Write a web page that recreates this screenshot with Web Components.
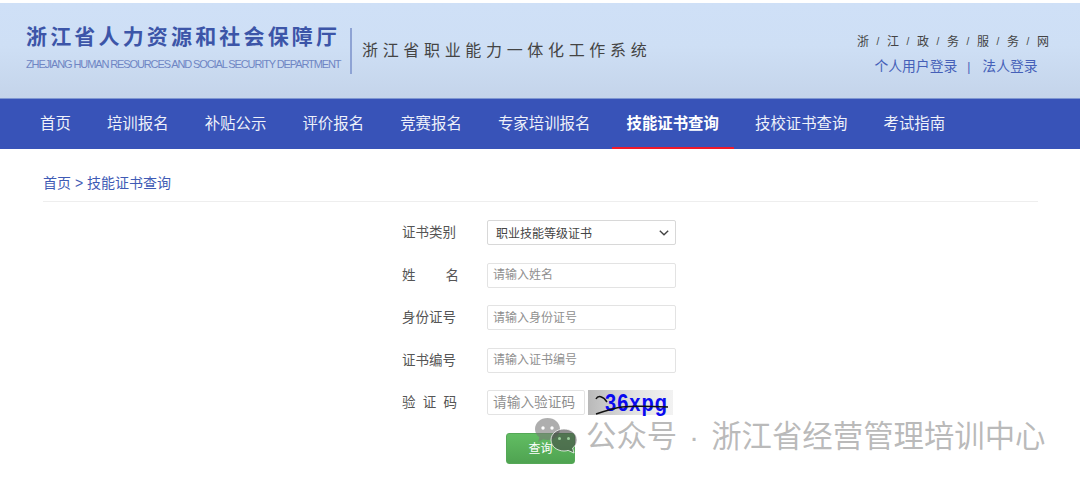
<!DOCTYPE html>
<html lang="zh">
<head>
<meta charset="utf-8">
<title>技能证书查询</title>
<style>
html, body { margin: 0; padding: 0; background: #fff; }
body { width: 1080px; height: 479px; overflow: hidden; position: relative; font-family: "Liberation Sans", "Noto Sans CJK SC", sans-serif; }
</style>
</head>
<body>
<site-header></site-header>
<main-nav active="技能证书查询" items="首页,培训报名,补贴公示,评价报名,竞赛报名,专家培训报名,技能证书查询,技校证书查询,考试指南"></main-nav>
<bread-crumb></bread-crumb>
<query-form>
  <form-row label="证书类别"><cert-select></cert-select></form-row>
  <form-row label="姓名" spread="wide"><text-field placeholder="请输入姓名"></text-field></form-row>
  <form-row label="身份证号"><text-field placeholder="请输入身份证号"></text-field></form-row>
  <form-row label="证书编号"><text-field placeholder="请输入证书编号"></text-field></form-row>
  <form-row label="验证码" spread="narrow"><text-field short placeholder="请输入验证码"></text-field><captcha-box></captcha-box></form-row>
  <query-button></query-button>
</query-form>
<wx-mark></wx-mark>

<script>
const FONT = '"Liberation Sans", "Noto Sans CJK SC", sans-serif';

class SiteHeader extends HTMLElement {
    constructor() {
        super();
        this.attachShadow({mode: 'open'});
    }
    connectedCallback() {
        const links = '浙江政务服务网'.split('').map(c => `<span>${c}</span>`).join('<i>/</i>');
        this.shadowRoot.innerHTML = `
            <style>
                :host { display: block; box-sizing: border-box; height: 96px; margin-top: 3px; padding: 21px 31px 0 26px;
                    background: linear-gradient(180deg, #cfe0f7 0%, #cedff5 45%, #c4d4ea 100%);
                    border-bottom: 1px solid #7f97d2; font-family: ${FONT}; }
                .wrap { display: flex; align-items: flex-start; }
                .org { width: 324px; }
                .cn { font-size: 21px; line-height: 26px; font-weight: bold; color: #3c55a8; letter-spacing: 3.17px; white-space: nowrap; }
                .en { font-size: 11px; line-height: 14px; margin-top: 7px; color: #6f86c4; letter-spacing: -1.11px; white-space: nowrap; }
                .bar { width: 2px; height: 46px; background: #8ea3d4; margin-top: 4px; }
                .sys { margin: 17px 0 0 10px; font-size: 16px; line-height: 20px; letter-spacing: 4.67px; color: #444; white-space: nowrap; }
                .right { margin-left: auto; display: flex; flex-direction: column; align-items: center; width: 192px; }
                .gov { display: flex; justify-content: space-between; width: 100%; margin-top: 10px; font-size: 12px; line-height: 16px; color: #444; }
                .gov i { font-style: normal; font-size: 10px; }
                .login { margin: 8px 0 0 6px; font-size: 13.8px; line-height: 18px; color: #4560b8; white-space: nowrap; display: flex; }
                .login b { font-weight: normal; font-size: 12px; margin: 0 12px 0 10px; }
            </style>
            <div class="wrap">
                <div class="org">
                    <div class="cn">浙江省人力资源和社会保障厅</div>
                    <div class="en">ZHEJIANG HUMAN RESOURCES AND SOCIAL SECURITY DEPARTMENT</div>
                </div>
                <div class="bar"></div>
                <div class="sys">浙江省职业能力一体化工作系统</div>
                <div class="right">
                    <div class="gov">${links}</div>
                    <div class="login"><span>个人用户登录</span><b>|</b><span>法人登录</span></div>
                </div>
            </div>
        `;
    }
}
customElements.define('site-header', SiteHeader);

class MainNav extends HTMLElement {
    constructor() {
        super();
        this.attachShadow({mode: 'open'});
    }
    connectedCallback() {
        const active = this.getAttribute('active');
        const items = this.getAttribute('items').split(',').map(t =>
            `<a class="${t === active ? 'on' : ''}">${t}</a>`).join('');
        this.shadowRoot.innerHTML = `
            <style>
                :host { display: block; height: 50px; background: #3853b8; font-family: ${FONT}; }
                nav { display: flex; gap: 6.18px; padding-left: 25px; height: 100%; }
                a { box-sizing: border-box; height: 50px; padding: 0 15px; line-height: 50px; font-size: 15.4px; color: #eef1fa; white-space: nowrap; }
                a.on { font-weight: bold; color: #fff; border-bottom: 2px solid #f01a2a; }
            </style>
            <nav>${items}</nav>
        `;
    }
}
customElements.define('main-nav', MainNav);

class BreadCrumb extends HTMLElement {
    constructor() {
        super();
        this.attachShadow({mode: 'open'});
    }
    connectedCallback() {
        this.shadowRoot.innerHTML = `
            <style>
                :host { display: block; box-sizing: border-box; width: 995px; height: 53px; margin-left: 43px; padding-top: 25px;
                    border-bottom: 1px solid #eee; font: 14px/18px ${FONT}; color: #3f5bb5; }
            </style>
            首页 &gt; 技能证书查询
        `;
    }
}
customElements.define('bread-crumb', BreadCrumb);

class QueryForm extends HTMLElement {
    constructor() {
        super();
        this.attachShadow({mode: 'open'});
    }
    connectedCallback() {
        this.shadowRoot.innerHTML = `
            <style>
                :host { display: flex; flex-direction: column; gap: 17.5px; margin: 18px 0 0 402px; width: 274px; }
            </style>
            <slot></slot>
        `;
    }
}
customElements.define('query-form', QueryForm);

class FormRow extends HTMLElement {
    constructor() {
        super();
        this.attachShadow({mode: 'open'});
    }
    connectedCallback() {
        const spread = this.getAttribute('spread');
        const width = spread === 'wide' ? '57px' : spread === 'narrow' ? '55px' : '54px';
        const chars = this.getAttribute('label').split('').map(c => `<span>${c}</span>`).join('');
        this.shadowRoot.innerHTML = `
            <style>
                :host { display: flex; align-items: center; height: 25px; font: 13.5px/25px ${FONT}; color: #555; }
                .label { display: flex; justify-content: space-between; width: ${width}; margin-right: calc(85px - ${width}); flex: none; white-space: nowrap; }
                .field { display: flex; gap: 3px; flex: 1; }
            </style>
            <div class="label">${chars}</div>
            <div class="field"><slot></slot></div>
        `;
    }
}
customElements.define('form-row', FormRow);

class TextField extends HTMLElement {
    constructor() {
        super();
        this.attachShadow({mode: 'open'});
    }
    connectedCallback() {
        const ph = this.getAttribute('placeholder');
        const short = this.hasAttribute('short');
        const w = short ? '98px' : '189px';
        const size = short ? '13.7px' : '12px';
        this.shadowRoot.innerHTML = `
            <style>
                :host { display: block; width: ${w}; height: 25px; }
                input { box-sizing: border-box; display: block; width: 100%; height: 100%; margin: 0; padding: 0 5px; outline: none;
                    background: #fff; border: 1px solid #e3e3e3; border-radius: 2px; font: ${size} ${FONT}; color: #555; }
                input::placeholder { color: #8f8f8f; opacity: 1; }
            </style>
            <input type="text" placeholder="${ph}">
        `;
    }
}
customElements.define('text-field', TextField);

class CertSelect extends HTMLElement {
    constructor() {
        super();
        this.attachShadow({mode: 'open'});
    }
    connectedCallback() {
        this.shadowRoot.innerHTML = `
            <style>
                :host { box-sizing: border-box; display: flex; align-items: center; justify-content: space-between; width: 189px; height: 25px;
                    padding: 0 6px 0 8px; background: #fff; border: 1px solid #d8d8d8; border-radius: 2px; font: 12px ${FONT}; color: #444; }
                svg { display: block; }
            </style>
            <span>职业技能等级证书</span>
            <svg width="10" height="6" viewBox="0 0 10 6"><path d="M.8.8 5 4.8 9.2.8" fill="none" stroke="#444" stroke-width="1.4"/></svg>
        `;
    }
}
customElements.define('cert-select', CertSelect);

class CaptchaBox extends HTMLElement {
    constructor() {
        super();
        this.attachShadow({mode: 'open'});
    }
    connectedCallback() {
        this.shadowRoot.innerHTML = `
            <style>
                :host { display: block; position: relative; width: 85px; height: 25px; flex: none;
                    background: linear-gradient(90deg, #b9b9b9 0%, #e2e2e2 55%, #f2f2f2 100%); }
                span { position: absolute; left: 17px; top: 1px; font: bold 24px/24px "Liberation Sans", sans-serif; letter-spacing: 1.2px; color: #0a0af0; white-space: nowrap;
                    transform: scaleX(.835); transform-origin: left center; }
                svg { position: absolute; left: 0; top: 0; z-index: 1; }
            </style>
            <span>36xpg</span>
            <svg width="85" height="25" viewBox="0 0 85 25"><path d="M8 9C10 5 15 6 19 12M8 24C20 20 26 18 34 17S60 16 80 17" fill="none" stroke="#111" stroke-width="1.5"/></svg>
        `;
    }
}
customElements.define('captcha-box', CaptchaBox);

class QueryButton extends HTMLElement {
    constructor() {
        super();
        this.attachShadow({mode: 'open'});
    }
    connectedCallback() {
        this.shadowRoot.innerHTML = `
            <style>
                :host { display: block; box-sizing: border-box; width: 69px; height: 31px; margin: 0 0 0 104px; text-align: center;
                    border-radius: 3px; background: linear-gradient(180deg, #62bd63 0%, #4fa351 100%); border: 1px solid #55a857;
                    font: 12px/31px ${FONT}; color: #fff; }
            </style>
            查询
        `;
    }
}
customElements.define('query-button', QueryButton);

class WxMark extends HTMLElement {
    constructor() {
        super();
        this.attachShadow({mode: 'open'});
    }
    connectedCallback() {
        this.shadowRoot.innerHTML = `
            <style>
                :host { position: absolute; left: 535px; top: 412px; display: flex; align-items: flex-start; gap: 8px; pointer-events: none;
                    font: 30.4px/42px "Liberation Sans", "Noto Sans CJK SC", sans-serif; word-spacing: 3.5px; color: rgba(140,140,140,.6); white-space: nowrap; }
                svg { display: block; flex: none; margin-top: 6px; }
                span { margin-top: 3px; }
            </style>
            <svg width="43" height="36" viewBox="0 0 43 36">
                <path d="M12.500 0C5.600 0 0 4.800 0 11c0 3.400 1.700 6.300 4.400 8.300L3 24l5.200-2.700c1.400.4 2.800.7 4.300.7 7 0 12.500-4.900 12.500-11S19.400 0 12.500 0Z" fill="rgba(120,120,120,.6)"/>
                <circle cx="8" cy="10" r="1.700" fill="#fff"/><circle cx="17" cy="10" r="1.700" fill="#fff"/>
                <path d="M29 11c-7 0-13 4.700-13 11s6 11 13 11c1.500 0 2.800-.2 4.100-.6L39 35l-1.400-5c3-2 4.400-4.900 4.400-8 0-6.300-6-11-13-11Z" fill="rgba(70,70,70,.6)" stroke="rgba(255,255,255,.75)"/>
                <circle cx="24.500" cy="20.500" r="1.500" fill="#9ccf9c"/><circle cx="33.500" cy="20.500" r="1.500" fill="#9ccf9c"/>
            </svg>
            <span>公众号 · 浙江省经营管理培训中心</span>
        `;
    }
}
customElements.define('wx-mark', WxMark);
</script>
</body>
</html>
